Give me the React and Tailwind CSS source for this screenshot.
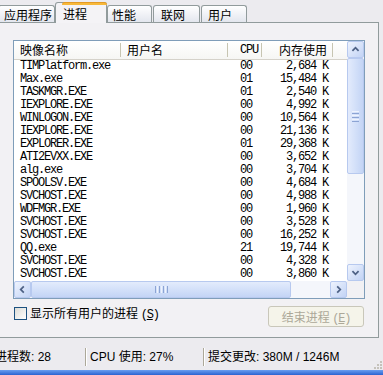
import React from 'react';

const rows = [
  ['TIMPlatform.exe', '00', '2,684 K'],
  ['Max.exe', '01', '15,484 K'],
  ['TASKMGR.EXE', '01', '2,540 K'],
  ['IEXPLORE.EXE', '00', '4,992 K'],
  ['WINLOGON.EXE', '00', '10,564 K'],
  ['IEXPLORE.EXE', '00', '21,136 K'],
  ['EXPLORER.EXE', '01', '29,368 K'],
  ['ATI2EVXX.EXE', '00', '3,652 K'],
  ['alg.exe', '00', '3,704 K'],
  ['SPOOLSV.EXE', '00', '4,684 K'],
  ['SVCHOST.EXE', '00', '4,988 K'],
  ['WDFMGR.EXE', '00', '1,960 K'],
  ['SVCHOST.EXE', '00', '3,528 K'],
  ['SVCHOST.EXE', '00', '16,252 K'],
  ['QQ.exe', '21', '19,744 K'],
  ['SVCHOST.EXE', '00', '4,328 K'],
  ['SVCHOST.EXE', '00', '3,860 K'],
];

const cjk = "font-['Noto_Sans_CJK_SC',sans-serif]";
const mono = "font-['Liberation_Mono','Noto_Sans_CJK_SC',monospace] tracking-[-1.2px]";

function Arrow({ dir }) {
  const pts = {
    up: '5,10 8.5,6.5 12,10',
    down: '5,7 8.5,10.5 12,7',
    left: '10,5 6.5,8.5 10,12',
    right: '7,5 10.5,8.5 7,12',
  }[dir];
  return (
    <svg width="17" height="17" viewBox="0 0 17 17">
      <polyline points={pts} fill="none" stroke="#4d6185" strokeWidth="2" />
    </svg>
  );
}

function ScrollBtn({ dir }) {
  return (
    <div className="w-[17px] h-[17px] shrink-0 rounded-[2px] border border-[#b7c9ef] bg-gradient-to-br from-[#eef3fd] to-[#c2d3f5] flex items-center justify-center">
      <Arrow dir={dir} />
    </div>
  );
}

function Tab({ label, className }) {
  return (
    <div
      className={`h-[17px] rounded-t-[3px] border border-b-0 border-[#919b9c] bg-gradient-to-b from-white to-[#e3e6ee] text-[12px] leading-[17px] text-black pl-[4px] ${cjk} ${className}`}
    >
      {label}
    </div>
  );
}

export default function App() {
  return (
    <div className="w-[383px] h-[375px] overflow-hidden bg-[#ecebef] flex flex-col select-none">
      {/* tabs */}
      <div className="h-[22px] flex items-end shrink-0">
        <Tab label="应用程序" className="w-[57px] ml-[-2px] pl-[5px]" />
        <div
          className={`relative z-10 w-[52px] h-[21px] -mb-px rounded-t-[3px] border border-b-0 border-[#919b9c] bg-[#f4f3f6] text-[12px] leading-[15px] pl-[7px] ${cjk}`}
        >
          <div className="h-[3px] -mx-px -mt-px mb-[1px] rounded-t-[3px] bg-[#f7b83a] border-t border-[#e39a26]" />
          进程
        </div>
        <Tab label="性能" className="w-[45px]" />
        <Tab label="联网" className="w-[47px] ml-[1px] pl-[7px]" />
        <Tab label="用户" className="w-[46px] ml-[1px] pl-[6px]" />
      </div>

      {/* panel */}
      <div className="h-[316px] w-[380px] ml-[-1px] shrink-0 border border-[#919b9c] bg-[#f2f1f4] pl-[13px] pt-[17px]">
        <div className="w-[352px] h-[259px] border border-[#7f9db9] bg-white flex flex-col">
          <div className="flex h-[240px]">
            <div className="w-[333px] flex flex-col">
              {/* header */}
              <div className={`h-[19px] flex border-b border-[#d5d2ca] bg-gradient-to-b from-white to-[#f6f6f4] text-[12px] ${cjk}`}>
                <div className="w-[107px] pl-[6px] border-r border-[#c7c5b2] my-[2px] leading-[14px]">映像名称</div>
                <div className="w-[107px] pl-[6px] border-r border-[#c7c5b2] my-[2px] leading-[14px]">用户名</div>
                <div className={`w-[34px] pl-[12px] border-r border-[#c7c5b2] my-[2px] leading-[14px] ${mono}`}>CPU</div>
                <div className="w-[71px] pr-[5px] text-right border-r border-[#c7c5b2] my-[2px] leading-[14px]">内存使用</div>
              </div>
              {rows.map(([name, cpu, mem], i) => (
                <div key={i} className={`h-[13px] flex text-[12px] leading-[13px] text-black ${mono}`}>
                  <div className="w-[214px] pl-[6px]">{name}</div>
                  <div className="w-[34px] pl-[12px]">{cpu}</div>
                  <div className="w-[71px] pr-[5px] text-right">{mem}</div>
                </div>
              ))}
            </div>
            {/* vertical scrollbar */}
            <div className="w-[17px] flex flex-col bg-[#f4f6fb]">
              <ScrollBtn dir="up" />
              <div className="h-[116px] rounded-[2px] border border-[#b7c9ef] bg-gradient-to-r from-[#e3ebfc] via-[#d3e0f9] to-[#c3d4f5] flex flex-col items-center justify-center gap-[1px]">
                <div className="w-[7px] h-px bg-[#eef3fd]" />
                <div className="w-[7px] h-px bg-[#8ca4d4]" />
                <div className="w-[7px] h-px bg-[#eef3fd]" />
                <div className="w-[7px] h-px bg-[#8ca4d4]" />
                <div className="w-[7px] h-px bg-[#eef3fd]" />
                <div className="w-[7px] h-px bg-[#8ca4d4]" />
              </div>
              <div className="flex-1" />
              <ScrollBtn dir="down" />
            </div>
          </div>
          <div className="flex h-[17px]">
            <div className="w-[333px] flex bg-[#f4f6fb]">
              <ScrollBtn dir="left" />
              <div className="w-[260px] rounded-[2px] border border-[#b7c9ef] bg-gradient-to-b from-[#e3ebfc] via-[#d3e0f9] to-[#c3d4f5] flex items-center justify-center gap-[1px]">
                <div className="h-[7px] w-px bg-[#8ca4d4]" />
                <div className="h-[7px] w-px bg-[#eef3fd]" />
                <div className="h-[7px] w-px bg-[#8ca4d4]" />
                <div className="h-[7px] w-px bg-[#eef3fd]" />
                <div className="h-[7px] w-px bg-[#8ca4d4]" />
                <div className="h-[7px] w-px bg-[#eef3fd]" />
                <div className="h-[7px] w-px bg-[#8ca4d4]" />
              </div>
              <div className="flex-1" />
              <ScrollBtn dir="right" />
            </div>
            <div className="w-[17px] bg-[#f2f1f4]" />
          </div>
        </div>

        {/* checkbox + button */}
        <div className="flex items-start mt-[7px] w-[351px]">
          <div className="mt-[1px] ml-[1px] w-[13px] h-[13px] border border-[#1c5180] bg-gradient-to-br from-[#dcdcd7] to-white" />
          <div className={`ml-[3px] text-[12px] leading-[14px] text-black ${cjk}`}>
            显示所有用户的进程 <span className={mono}>(<span className="underline">S</span>)</span>
          </div>
          <div className={`ml-auto w-[96px] h-[21px] rounded-[3px] border border-[#c9c7ba] bg-[#f5f4ea] text-[#aca899] text-[12px] leading-[19px] text-center ${cjk}`}>
            结束进程 <span className={mono}>(<span className="underline">E</span>)</span>
          </div>
        </div>
      </div>

      {/* status bar */}
      <div className="h-[32px] shrink-0 flex items-center pt-[6px] text-[12px] text-black font-['Liberation_Sans','Noto_Sans_CJK_SC',sans-serif]">
        <div className="w-[90px] shrink-0 ml-[-5px] leading-[14px] whitespace-nowrap">进程数: 28</div>
        <div className="w-[2px] h-[18px] shrink-0 border-l border-[#aca899] border-r border-r-white" />
        <div className="w-[116px] shrink-0 pl-[3px] leading-[14px] whitespace-nowrap">CPU 使用: 27%</div>
        <div className="w-[2px] h-[18px] shrink-0 border-l border-[#aca899] border-r border-r-white" />
        <div className="flex-1 pl-[3px] leading-[14px] whitespace-nowrap">提交更改: 380M / 1246M</div>
        <div className="self-end mb-[1px] mr-[1px] w-[8px] h-[8px] grid grid-cols-3 gap-[1px] opacity-60">
          <div /><div /><div className="bg-[#aca899]" />
          <div /><div className="bg-[#aca899]" /><div className="bg-[#aca899]" />
          <div className="bg-[#aca899]" /><div className="bg-[#aca899]" /><div className="bg-[#aca899]" />
        </div>
      </div>
      <div className="h-[5px] shrink-0 bg-gradient-to-b from-[#6a9ef0] to-[#2a62d0]" />
    </div>
  );
}
